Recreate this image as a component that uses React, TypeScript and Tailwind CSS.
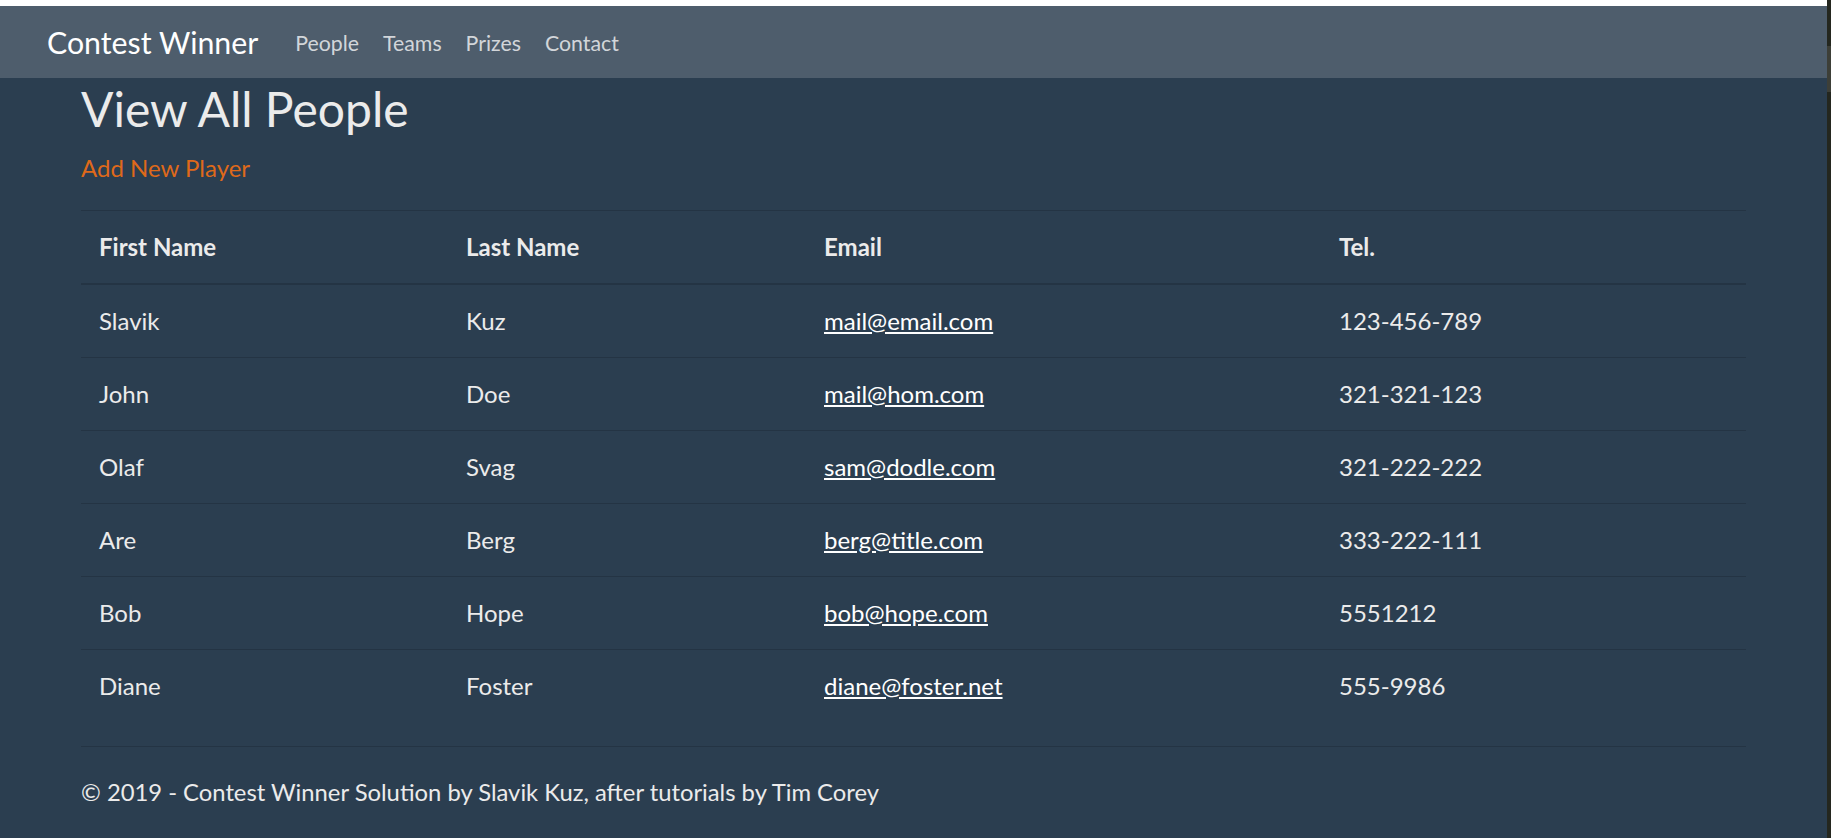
import React from 'react';

interface Person {
  first: string;
  last: string;
  email: string;
  tel: string;
}

const PEOPLE: Person[] = [
  { first: 'Slavik', last: 'Kuz', email: 'mail@email.com', tel: '123-456-789' },
  { first: 'John', last: 'Doe', email: 'mail@hom.com', tel: '321-321-123' },
  { first: 'Olaf', last: 'Svag', email: 'sam@dodle.com', tel: '321-222-222' },
  { first: 'Are', last: 'Berg', email: 'berg@title.com', tel: '333-222-111' },
  { first: 'Bob', last: 'Hope', email: 'bob@hope.com', tel: '5551212' },
  { first: 'Diane', last: 'Foster', email: 'diane@foster.net', tel: '555-9986' },
];

const NAV_LINKS = ['People', 'Teams', 'Prizes', 'Contact'];

function NavBar() {
  return (
    <nav className="flex h-[72px] items-center bg-[#4e5d6c] pl-[47px] pt-[1px]">
      <a href="#" className="mr-[25px] text-[30.3px] leading-[45px] text-white">
        Contest Winner
      </a>
      <ul className="flex">
        {NAV_LINKS.map((link) => (
          <li key={link}>
            <a href="#" className="block px-[12px] text-[21.3px] leading-[32px] text-white/75">
              {link}
            </a>
          </li>
        ))}
      </ul>
    </nav>
  );
}

function PeopleTable() {
  return (
    <table className="mb-[24px] w-full table-fixed border-collapse text-left text-[24px] leading-[36px]">
      <colgroup>
        <col className="w-[367px]" />
        <col className="w-[358px]" />
        <col className="w-[515px]" />
        <col className="w-[425px]" />
      </colgroup>
      <thead>
        <tr className="border-t border-b-2 border-[rgba(0,0,0,0.15)]">
          <th className="px-[18px] py-[18px] font-bold">First Name</th>
          <th className="px-[18px] py-[18px] font-bold">Last Name</th>
          <th className="px-[18px] py-[18px] font-bold">Email</th>
          <th className="px-[18px] py-[18px] font-bold">Tel.</th>
        </tr>
      </thead>
      <tbody>
        {PEOPLE.map((p, i) => (
          <tr key={p.email} className={i === 0 ? '' : 'border-t border-[rgba(0,0,0,0.15)]'}>
            <td className="px-[18px] py-[18px]">{p.first}</td>
            <td className="px-[18px] py-[18px]">{p.last}</td>
            <td className="px-[18px] py-[18px]">
              <a href="#" className="text-white underline">
                {p.email}
              </a>
            </td>
            <td className="px-[18px] py-[18px]">{p.tel}</td>
          </tr>
        ))}
      </tbody>
    </table>
  );
}

export default function App() {
  return (
    <div className="flex min-h-[838px] bg-[#2b3e50] font-['Lato',sans-serif] text-[#ebebeb]">
      <div className="flex flex-1 flex-col">
        <div className="h-[6px] bg-white" />
        <NavBar />
        <main className="mx-auto w-[1665px] pt-[2px]">
          <h2 className="mb-[12px] text-[48px] leading-[1.2]">View All People</h2>
          <p className="mb-[24px] text-[24px] leading-[36px]">
            <a href="#" className="text-[#df691a]">
              Add New Player
            </a>
          </p>
          <PeopleTable />
        </main>
        <footer className="mx-auto w-[1665px] border-t border-[rgba(0,0,0,0.15)] text-[23.8px] leading-[90px]">
          © 2019 - Contest Winner Solution by Slavik Kuz, after tutorials by Tim Corey
        </footer>
      </div>
      {/* page scrollbar */}
      <div className="w-[4px] bg-[#24271f]">
        <div className="mt-[46px] h-[46px] bg-[#3d3f38]" />
      </div>
    </div>
  );
}
